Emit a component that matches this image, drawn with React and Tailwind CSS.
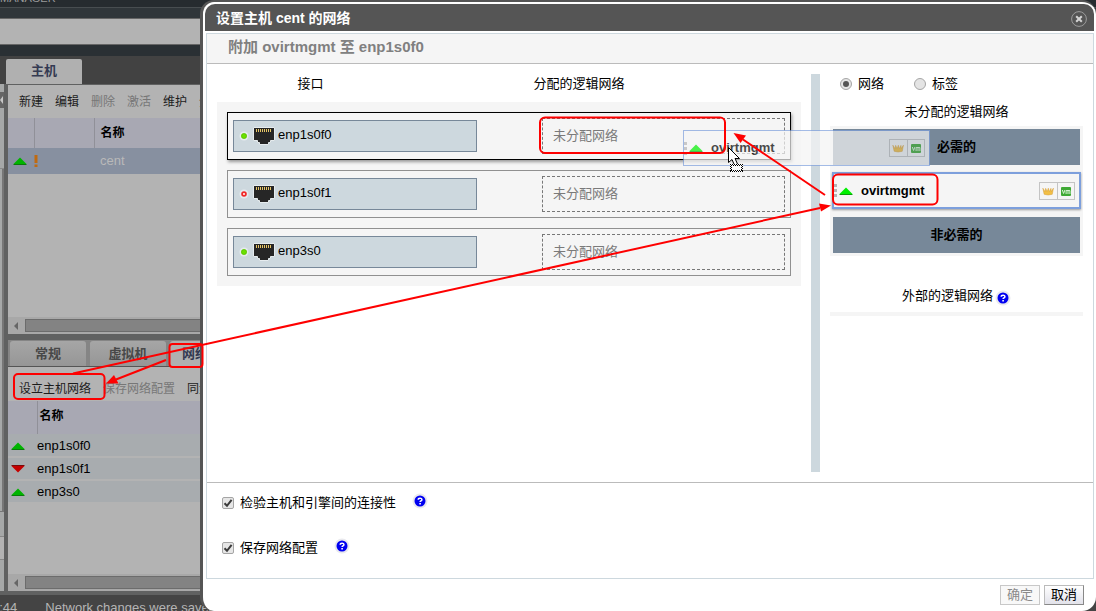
import React, { useState } from "react";
import clsx from "clsx";

function UpArrow({ color = "#00b400", edge = "#0a7a0a" }) {
  return (
    <svg width="14" height="8" viewBox="0 0 14 8" className="shrink-0">
      <path d="M7 0.5 L13.5 7 H0.5 Z" fill={color} />
      <path d="M0.5 7.5 H13.5" stroke={edge} strokeWidth="1" />
    </svg>
  );
}

function DownArrow() {
  return (
    <svg width="14" height="8" viewBox="0 0 14 8" className="shrink-0">
      <path d="M7 7.5 L13.5 1 H0.5 Z" fill="#c40000" />
      <path d="M0.5 0.5 H13.5" stroke="#7a0a0a" strokeWidth="1" />
    </svg>
  );
}

function PortIcon() {
  const pins = [3, 5, 7, 9, 11, 13, 15, 17];
  return (
    <svg width="24" height="20" viewBox="0 0 24 20" className="shrink-0">
      <path
        d="M1.5 1.5 H22.5 V14.5 H18.5 V16.5 H16.5 V18.5 H7.5 V16.5 H5.5 V14.5 H1.5 Z"
        fill="#262626"
        stroke="#e6ecef"
        strokeWidth="1"
      />
      {pins.map((x) => (
        <rect key={x} x={x + 1} y="3" width="1" height="3" fill="#e6c566" />
      ))}
    </svg>
  );
}

function Led({ up }) {
  return (
    <svg width="10" height="10" viewBox="0 0 10 10" className="shrink-0">
      <circle cx="5" cy="5" r="4.5" fill="#e6ebee" />
      <circle cx="5" cy="5" r="2.8" fill={up ? "#6be000" : "#f02828"} />
      {up ? (
        <circle cx="5" cy="5" r="2.5" fill="none" stroke="#52b800" strokeWidth="0.6" />
      ) : (
        <path d="M4 4 L6 6 M6 4 L4 6" stroke="#ffd6d6" strokeWidth="0.9" />
      )}
    </svg>
  );
}

function HelpIcon() {
  return (
    <button type="button" aria-label="帮助" className="size-4 shrink-0">
      <svg width="16" height="16" viewBox="0 0 16 16">
        <circle cx="8" cy="8" r="7.5" fill="#e9e9ee" />
        <circle cx="8" cy="8" r="5.5" fill="#0000f0" />
        <path d="M6.2 6.8 C6.2 4.6 9.9 4.6 9.9 6.7 C9.9 7.9 8.1 7.9 8.1 9.1" fill="none" stroke="#fff" strokeWidth="1.5" />
        <rect x="7.3" y="10" width="1.6" height="1.5" fill="#fff" />
      </svg>
    </button>
  );
}

function RoleIcons() {
  return (
    <span className="flex shrink-0 border border-[#c4c4c4]">
      <svg width="18" height="16" viewBox="0 0 18 16" className="border-r border-[#c4c4c4]">
        <path d="M3 5 L5.2 8.6 L6 5.2 L7.6 8.6 L8.8 5 L10 8.6 L11.6 5.2 L12 8.6 L14.2 5 L13 11.5 Q8.5 13 4.4 11.5 Z" fill="#f2bf45" stroke="#d59a30" strokeWidth="0.5" />
      </svg>
      <svg width="16" height="16" viewBox="0 0 16 16">
        <rect x="3" y="4" width="10" height="9" rx="1" fill="#3fa935" />
        <path d="M4.3 7 L5.6 10.5 L6.9 7 M8.1 11 V7.5 H11.9 V11 M10 7.5 V11" fill="none" stroke="#d8f2d4" strokeWidth="1" />
      </svg>
    </span>
  );
}

function Grip() {
  return (
    <span className="flex w-[3px] shrink-0 flex-col gap-[2px]">
      <i className="h-[3px] bg-[#b5b5b5]" />
      <i className="h-[3px] bg-[#b5b5b5]" />
      <i className="h-[3px] bg-[#b5b5b5]" />
    </span>
  );
}

function Scrollbar() {
  return (
    <div className="flex h-[17px] shrink-0 items-center bg-[#a8a8a8] pl-[6px]">
      <svg width="4" height="8" viewBox="0 0 4 8">
        <path d="M4 0 V8 L0 4 Z" fill="#666" />
      </svg>
      <div className="ml-[7px] h-[13px] flex-1 border border-[#6c6c6c] bg-[#838383]" />
    </div>
  );
}

function Tab({ children, active }) {
  return (
    <button
      type="button"
      className={clsx(
        "h-[25px] w-[76px] shrink-0 rounded-t-[3px] text-[13px] font-bold",
        active ? "bg-[#b0b0b0] text-[#343a52]" : "bg-linear-to-b from-[#a6a6a6] to-[#969696] text-[#484848]"
      )}
    >
      {children}
    </button>
  );
}

function ToolButton({ children, disabled }) {
  return (
    <button
      type="button"
      disabled={disabled}
      className={clsx("shrink-0 whitespace-nowrap text-[12px]", disabled ? "text-[#777]" : "text-[#1c1c1c]")}
    >
      {children}
    </button>
  );
}

const nics = [
  { name: "enp1s0f0", up: true },
  { name: "enp1s0f1", up: false },
  { name: "enp3s0", up: true },
];

function Background() {
  return (
    <div className="flex h-full flex-col overflow-hidden bg-[#2a3034]">
      <div className="flex h-[7px] shrink-0 items-end overflow-hidden bg-[#262b2f] pb-1 text-[11px] leading-[10px] text-[#9a9a9a]">
        MANAGER
      </div>
      <div className="h-[11px] shrink-0 border-t border-[#484d50] bg-[#30363a]" />
      <div className="h-[27px] shrink-0 border-y border-[#666] bg-[#b3b3b3]" />
      <div className="h-[11px] shrink-0" />
      <div className="flex h-[28px] shrink-0 items-end bg-[#424242] pl-[6px]">
        <button type="button" className="h-[25px] w-[76px] rounded-t-[2px] bg-[#b0b0b0] pb-[2px] text-[13px] font-bold text-[#343a52]">
          主机
        </button>
      </div>
      <div className="flex min-h-0 flex-1">
        <div className="flex w-1 shrink-0 flex-col bg-[#a6a8a8]">
          <div className="mt-2 flex h-4 items-center bg-[#666]">
            <svg width="4" height="8" viewBox="0 0 4 8">
              <path d="M3 0 V8 L0 4 Z" fill="#c8c8c8" />
            </svg>
          </div>
          <div className="h-[61px] border-b border-[#8a8a8a]" />
          <div className="h-[343px] border-r-2 border-b border-[#777]" />
          <div className="h-6" />
          <div className="h-6 border-y border-[#888] bg-[#b3b3b3]" />
        </div>
        <div className="w-1 shrink-0 bg-[#606161]" />
        <main className="flex min-w-0 flex-1 flex-col border-t border-[#606161] bg-[#b3b3b3]">
          <section className="flex min-h-0 flex-1 flex-col">
            <div className="flex h-[33px] shrink-0 items-center gap-3 overflow-hidden pl-[11px]">
              <ToolButton>新建</ToolButton>
              <ToolButton>编辑</ToolButton>
              <ToolButton disabled>删除</ToolButton>
              <ToolButton disabled>激活</ToolButton>
              <ToolButton>维护</ToolButton>
              <ToolButton>分配标签</ToolButton>
            </div>
            <table className="w-full table-fixed border-collapse text-left">
              <thead>
                <tr className="h-[30px] bg-[#a8a8b3] text-[12px] text-black">
                  <th className="w-[26px] border-r border-[#909098]" />
                  <th className="w-[60px] border-r border-[#909098]" />
                  <th className="pl-[6px] font-bold">名称</th>
                </tr>
              </thead>
              <tbody>
                <tr className="h-[26px] bg-[#8790a0] text-[13px] text-[#b9b9b9]">
                  <td className="pl-[5px]"><UpArrow /></td>
                  <td>
                    <svg width="4" height="12" viewBox="0 0 4 12">
                      <path d="M2 0 V8 M2 9.500 V12" stroke="#c06a10" strokeWidth="3" />
                    </svg>
                  </td>
                  <td className="pl-[6px]">cent</td>
                </tr>
              </tbody>
            </table>
            <div className="flex-1" />
            <Scrollbar />
          </section>
          <div className="h-[6px] shrink-0 bg-[#606161]" />
          <section className="flex h-[251px] shrink-0 flex-col">
            <div className="flex h-[27px] shrink-0 items-end gap-1 border-b border-[#555] bg-[#858585] pl-[2px]">
              <Tab>常规</Tab>
              <Tab>虚拟机</Tab>
              <Tab active>网络接口</Tab>
            </div>
            <div className="flex h-[34px] shrink-0 items-center gap-3 overflow-hidden pt-[9px] pl-[11px]">
              <ToolButton>设立主机网络</ToolButton>
              <ToolButton disabled>保存网络配置</ToolButton>
              <ToolButton>同步所有网络</ToolButton>
            </div>
            <table className="w-full table-fixed border-collapse text-left">
              <thead>
                <tr className="h-[33px] bg-[#a8a8b3] text-[12px] text-black">
                  <th className="w-[29px] border-r border-[#909098]" />
                  <th className="pb-1 pl-[2px] font-bold">名称</th>
                </tr>
              </thead>
              <tbody>
                {nics.map((n) => (
                  <tr key={n.name} className="h-[23px] border-b-2 border-[#b3b3b3] bg-[#a8acaf] text-[13px] leading-5 text-black">
                    <td className="pt-px pl-[3px]">{n.up ? <UpArrow /> : <DownArrow />}</td>
                    <td className="pt-px">{n.name}</td>
                  </tr>
                ))}
              </tbody>
            </table>
            <div className="flex-1" />
            <Scrollbar />
          </section>
        </main>
      </div>
      <footer className="flex h-5 shrink-0 gap-7 overflow-hidden border-t-4 border-[#606161] bg-[#444] pt-[5px] text-[13px] leading-4 text-[#b5b5b5]">
        <span className="-ml-2 whitespace-nowrap">2:44</span>
        <span className="whitespace-nowrap">Network changes were saved on host cent</span>
      </footer>
    </div>
  );
}

function NicRow({ nic, active }) {
  return (
    <div
      className={clsx(
        "flex h-12 items-center justify-between border px-[5px]",
        active ? "border-black shadow-[1px_2px_3px_#999]" : "border-[#909090]"
      )}
    >
      <div className="flex h-8 w-[244px] items-center border border-[#778899] bg-[#cdd8de] pl-[5px]">
        <Led up={nic.up} />
        <span className="ml-[3px]"><PortIcon /></span>
        <span className="ml-[2px] pb-[3px]">{nic.name}</span>
      </div>
      <div className="flex h-9 w-[243px] items-center border border-dashed border-[#777] pl-[10px] text-[#7a7a7a]">
        未分配网络
      </div>
    </div>
  );
}

function CheckOption({ id, label }) {
  const [on, setOn] = useState(true);
  return (
    <div className="flex h-[18px] items-center">
      <span className="relative flex size-3">
        <input
          id={id}
          type="checkbox"
          checked={on}
          onChange={(e) => setOn(e.target.checked)}
          className="size-3 appearance-none rounded-[2px] border border-[#a5a5a5] bg-[#e6e6e6]"
        />
        {on && (
          <svg width="12" height="12" viewBox="0 0 12 12" className="pointer-events-none absolute inset-0">
            <path d="M2.5 6.2 L5 8.8 L9.6 2.8" fill="none" stroke="#3c3c3c" strokeWidth="2" />
          </svg>
        )}
      </span>
      <label htmlFor={id} className="ml-[6px]">{label}</label>
      <span className="ml-4 flex pb-1"><HelpIcon /></span>
    </div>
  );
}

function RadioOption({ id, label, checked, onChange }) {
  return (
    <div className="flex items-center gap-[6px]">
      <span className="relative flex size-3">
        <input
          id={id}
          type="radio"
          name="mode"
          checked={checked}
          onChange={onChange}
          className="size-3 appearance-none rounded-full border border-[#a5a5a5] bg-[#e4e4e4]"
        />
        {checked && <i className="pointer-events-none absolute inset-[3px] rounded-full bg-[#555]" />}
      </span>
      <label htmlFor={id}>{label}</label>
    </div>
  );
}

function Dialog() {
  const [mode, setMode] = useState("net");
  return (
    <div
      role="dialog"
      aria-label="设置主机 cent 的网络"
      className="flex h-full flex-col rounded-[14px] border-t-2 border-l-3 border-[#555] bg-white pt-[2px] pr-[2px] pl-[2px] text-[13px] leading-5 text-black"
    >
      <header className="flex h-[27px] shrink-0 items-center justify-between rounded-t-[10px] bg-[#555] pr-[7px] pl-[11px]">
        <h1 className="text-[14px] font-bold text-white">设置主机 cent 的网络</h1>
        <button type="button" aria-label="关闭" className="mt-[2px] size-4">
          <svg width="16" height="16" viewBox="0 0 16 16">
            <circle cx="8" cy="8" r="7.4" fill="#555" stroke="#9c9c9c" strokeWidth="1" />
            <path d="M5.200 5.200 L10.800 10.800 M10.800 5.200 L5.200 10.800" stroke="#d5d5d5" strokeWidth="2" />
          </svg>
        </button>
      </header>
      <div className="mt-[2px] ml-px flex min-h-0 flex-1 flex-col border border-[#cdd8de]">
        <h2 className="flex h-[30px] shrink-0 items-center border-b border-[#bbb] bg-[#f5f5f5] pb-1 pl-[21px] text-[15px] font-bold text-[#808080]">
          附加 ovirtmgmt 至 enp1s0f0
        </h2>
        <div className="flex min-h-0 flex-1 gap-[10px] p-[10px]">
          <section className="min-w-0 flex-1">
            <div className="flex h-7 text-center">
              <div className="w-[32%]">接口</div>
              <div className="w-[60%]">分配的逻辑网络</div>
            </div>
            <div className="flex flex-col gap-[10px] bg-[#f5f5f5] p-[10px]">
              {nics.map((n, i) => (
                <NicRow key={n.name} nic={n} active={i === 0} />
              ))}
            </div>
          </section>
          <div className="w-[9px] shrink-0 bg-[#cdd8de]" />
          <section className="w-[253px] shrink-0">
            <div className="flex h-7 items-start gap-[30px] pl-[10px]">
              <RadioOption id="mode-net" label="网络" checked={mode === "net"} onChange={() => setMode("net")} />
              <RadioOption id="mode-label" label="标签" checked={mode === "label"} onChange={() => setMode("label")} />
            </div>
            <h3 className="h-6 text-center">未分配的逻辑网络</h3>
            <div className="bg-[#f5f5f5] px-[2px] py-[3px] font-bold">
              <div className="mx-px flex h-9 items-center justify-center bg-[#778899]">必需的</div>
              <div className="mt-[7px] mb-2 flex h-[37px] items-center border-2 border-[#7d9fdc] bg-[#f5f5f5] pr-1 shadow-[0_1px_2px_#999]">
                <Grip />
                <span className="ml-[2px]"><UpArrow color="#00f000" edge="#0a9a0a" /></span>
                <span className="ml-2 flex-1">ovirtmgmt</span>
                <RoleIcons />
              </div>
              <div className="mx-px flex h-9 items-center justify-center bg-[#778899]">非必需的</div>
            </div>
            <div className="mt-[30px] flex items-center justify-center gap-[2px]">
              <span>外部的逻辑网络</span>
              <span className="flex pt-[3px]"><HelpIcon /></span>
            </div>
            <div className="mt-[6px] h-1 bg-[#f5f5f5]" />
          </section>
        </div>
        <div className="flex h-24 shrink-0 flex-col gap-[27px] border-t border-[#bbb] pt-[11px] pl-[15px]">
          <CheckOption id="verify" label="检验主机和引擎间的连接性" />
          <CheckOption id="save" label="保存网络配置" />
        </div>
      </div>
      <footer className="flex h-8 shrink-0 items-start justify-end gap-1 pt-[6px] pr-[10px]">
        <button type="button" disabled className="h-5 w-10 border border-[#c8c8c8] bg-[#f8f8f8] leading-4 text-[#8a8a8a]">
          确定
        </button>
        <button type="button" className="h-5 w-10 border border-[#bbb] border-r-[#888] border-b-[#888] bg-linear-to-b from-white to-[#e2e2ea] leading-4">
          取消
        </button>
      </footer>
    </div>
  );
}

function DragGhost() {
  return (
    <div className="pointer-events-none absolute top-[130px] right-[166px] flex h-9 w-[247px] items-center border border-[#7d9fdc] bg-[#f5f5f5] pr-1 text-[13px] font-bold text-black opacity-70">
      <Grip />
      <span className="ml-[2px]"><UpArrow color="#00f000" edge="#0a9a0a" /></span>
      <span className="ml-2 flex-1">ovirtmgmt</span>
      <RoleIcons />
    </div>
  );
}

function Annotations() {
  return (
    <svg width="1096" height="611" viewBox="0 0 1096 611" className="pointer-events-none absolute top-0 left-0">
      <g fill="none" stroke="#fe0000" strokeWidth="2">
        <rect x="540" y="117.500" width="185" height="35.500" rx="5" />
        <rect x="833" y="174.500" width="104.500" height="30" rx="5" />
        <rect x="14" y="374" width="90.500" height="25" rx="4" />
        <rect x="169.500" y="344" width="33" height="23" rx="3" />
        <path d="M73 373.500 L820 208" />
        <path d="M166 360 L116 379.500" />
        <path d="M825 195 L743 139.500" />
      </g>
      <g fill="#fe0000">
        <path d="M831 205.500 L819 203.500 L821 211.500 Z" />
        <path d="M106 383.500 L114 375 L118.500 383.500 Z" />
        <path d="M733.500 133 L746 135.500 L740.500 143 Z" />
      </g>
      <path d="M728.500 147.500 V162.500 L732 159.500 L735 166.500 L738 165 L735 158.500 H739.500 Z" fill="#fff" stroke="#000" strokeWidth="1" />
      <g shapeRendering="crispEdges">
        <rect x="730" y="164" width="13" height="8" fill="#fff" />
        <path d="M730 164.500 H743 M730 171.500 H743 M730.500 164 V172 M742.500 164 V172" fill="none" stroke="#000" strokeDasharray="1 1" />
        <path d="M731 165.500 H742 M731 170.500 H742 M731.500 165 V171 M741.500 165 V171" fill="none" stroke="#000" strokeDasharray="1 1" />
      </g>
    </svg>
  );
}

export default function App() {
  return (
    <div className="relative h-screen overflow-hidden bg-[#2a3034] font-['Liberation_Sans','Noto_Sans_CJK_SC',sans-serif]">
      <Background />
      <div className="absolute inset-y-0 right-0 left-[200px]">
        <Dialog />
      </div>
      <DragGhost />
      <Annotations />
    </div>
  );
}
